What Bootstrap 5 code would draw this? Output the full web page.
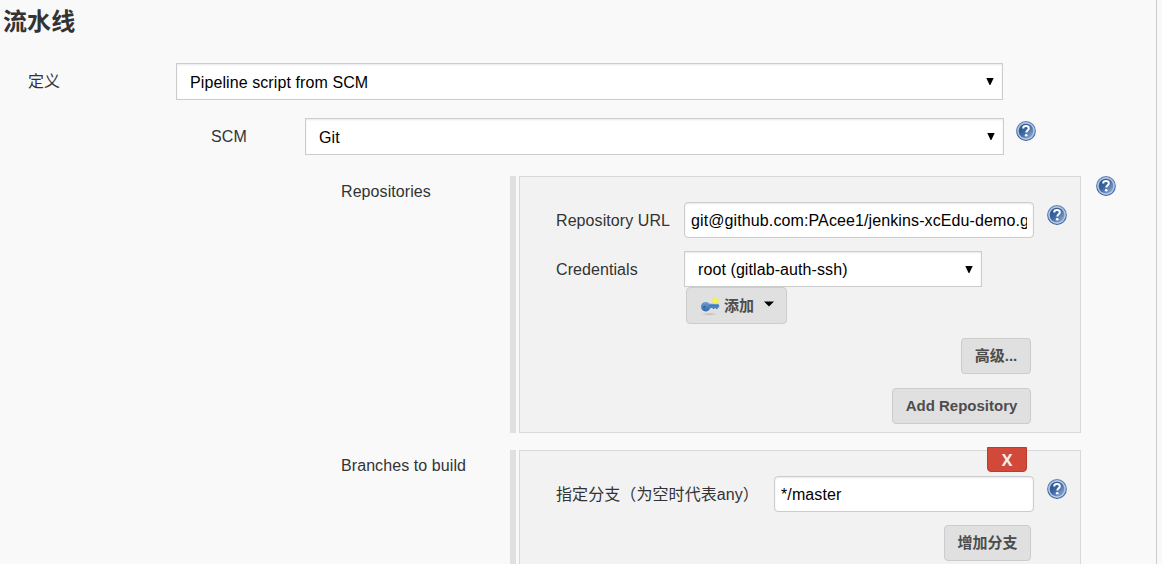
<!DOCTYPE html>
<html lang="zh-CN">
<head>
<meta charset="utf-8">
<meta name="viewport" content="width=device-width, initial-scale=1">
<title>流水线</title>
<link href="https://cdn.jsdelivr.net/npm/bootstrap@5.3.0/dist/css/bootstrap.min.css" rel="stylesheet">
<style>
body{background:#f9f9f9;color:#333;font:16px/20px "Liberation Sans","Noto Sans CJK SC",sans-serif;letter-spacing:.08px;overflow:hidden}
.config{width:1157px;height:564px;border-right:1px solid #ccc;overflow:hidden}
.title{font-size:24px;line-height:30px;font-weight:700;padding:7px 0 0 3px;height:63px}
.c1{width:148px;padding-top:9px}
.c2{width:94px;padding-top:9px}
.c3{width:169px;padding-top:6px}
.form-select,.form-control{border:1px solid #ccc;color:#000;font:inherit;line-height:20px;box-shadow:inset 0 1px 2px rgba(0,0,0,.09);height:36px}
.form-select{border-radius:0;letter-spacing:.09px;padding:2px 30px 0 13px;background:#fff url("data:image/svg+xml,%3Csvg xmlns='http://www.w3.org/2000/svg' width='8' height='7'%3E%3Cpath d='M.3 0h7.4L4.4 7h-.8z'/%3E%3C/svg%3E") no-repeat right 8px top 14px;background-size:8px 7px}
.form-control{border-radius:4px;padding:1px 6px 0;letter-spacing:.11px}
.form-select.tall,.btn-gray.tall{height:37px}
.sel1{width:827px}.sel2{width:699px}.sel3{width:298px}
.in1{width:350px}.in2{width:260px}
.help{width:20px;height:20px;flex:none;display:block}
.handle{width:6px;background:#e0e0e0;margin-right:3px}
.panel{width:562px;background:#f2f2f2;border:1px solid #d8d8d8;padding:25px 13px 8px 36px}
.panel-lbl{padding-top:9px;white-space:nowrap}
.btn-gray{background:#e0e0e0;border:1px solid #ccc;border-radius:4px;color:#4d4d4d;font:bold 15px/20px "Liberation Sans","Noto Sans CJK SC",sans-serif;letter-spacing:0;height:36px;padding:0;white-space:nowrap}
.btn-x{position:absolute;left:467px;top:-4px;width:40px;height:25px;background:#d24939;border:1px solid #b93c2e;border-radius:0 0 4px 4px;color:#eee;font:bold 16px/22px "Open Sans",sans-serif;padding:0}
</style>
</head>
<body>
<svg width="0" height="0" class="position-absolute">
<defs>
<linearGradient id="blue" x1="0" y1="0" x2="1" y2="1"><stop offset="0" stop-color="#244f91"/><stop offset=".45" stop-color="#3b659f"/><stop offset="1" stop-color="#9bb5d9"/></linearGradient>
<linearGradient id="rim" x1="0" y1="0" x2="0" y2="1"><stop offset="0" stop-color="#5f84b8"/><stop offset="1" stop-color="#33609f"/></linearGradient>
<linearGradient id="metal" x1="0" y1="0" x2="0" y2="1"><stop offset="0" stop-color="#6fa0d5"/><stop offset="1" stop-color="#326aae"/></linearGradient>
<radialGradient id="glow"><stop offset="0" stop-color="#fff94c"/><stop offset=".6" stop-color="#f7ee45"/><stop offset="1" stop-color="#f7ee45" stop-opacity="0"/></radialGradient>
<radialGradient id="shade"><stop offset="0" stop-color="#999" stop-opacity=".55"/><stop offset="1" stop-color="#999" stop-opacity="0"/></radialGradient>
<symbol id="help" viewBox="0 0 20 20">
<circle cx="10" cy="10" r="9.9" fill="url(#rim)"/><circle cx="10" cy="10" r="8.9" fill="#b3c5df"/><circle cx="10" cy="10" r="7.3" fill="url(#blue)"/>
<path d="M7.2 7.4C7.2 5.7 8.4 5.1 10 5.1s2.8.8 2.8 2.3c0 1.9-2.5 1.9-2.5 4.1" fill="none" stroke="#fff" stroke-width="2"/><circle cx="10.2" cy="14.2" r="1.3" fill="#fff"/>
</symbol>
</defs>
</svg>
<main class="config">
  <h1 class="title m-0">流水线</h1>
  <div class="d-flex" style="padding-left:28px">
    <label class="c1">定义</label>
    <select class="form-select tall sel1"><option>Pipeline script from SCM</option></select>
  </div>
  <div class="d-flex" style="padding:18px 0 0 211px">
    <label class="c2">SCM</label>
    <select class="form-select tall sel2"><option>Git</option></select>
    <svg class="help" style="margin:3px 0 0 12px"><use href="#help"/></svg>
  </div>
  <section class="d-flex" style="padding:21px 0 0 341px">
    <div class="c3">Repositories</div>
    <div class="handle"></div>
    <div class="panel" style="height:257px">
      <div class="d-flex">
        <label class="panel-lbl" style="width:128px">Repository URL</label>
        <input class="form-control in1" value="git@github.com:PAcee1/jenkins-xcEdu-demo.git">
        <svg class="help" style="margin:3px 0 0 13px"><use href="#help"/></svg>
      </div>
      <div class="d-flex" style="margin-top:13px">
        <label class="panel-lbl" style="width:128px">Credentials</label>
        <div>
          <select class="form-select sel3"><option>root (gitlab-auth-ssh)</option></select>
          <button class="btn btn-gray tall d-flex align-items-center" style="width:101px;margin-left:2px;padding-left:13px">
            <svg width="20" height="20" viewBox="0 0 20 20"><ellipse cx="9.5" cy="18.2" rx="8.5" ry="1.5" fill="url(#shade)"/><path d="M1 10.8C1 7.8 3 6 5.5 6c1.7 0 3 .7 3.8 1.7H18l1.2 1.3v2.6h-1.5V13h-1.9v-1.1h-1.2V13h-1.9v-1.1h-2.3c-.9 2.3-2.5 3.5-4.7 3.5-2.8 0-4.7-1.9-4.7-4.6z" fill="url(#metal)"/><circle cx="4.3" cy="10.9" r="1.2" fill="#396396"/><path d="M9 9.6h9" stroke="#3d6ba3" stroke-width=".7"/><circle cx="15.4" cy="4.9" r="3.8" fill="url(#glow)"/></svg>
            <span style="margin-left:4px">添加</span>
            <svg width="10" height="6" style="margin:-3px 0 0 10px"><path d="M0 .5h10L5 5.5z" fill="#000"/></svg>
          </button>
        </div>
      </div>
      <div class="d-flex flex-column align-items-end" style="margin:14px 36px 0 0;gap:14px">
        <button class="btn btn-gray" style="width:70px">高级...</button>
        <button class="btn btn-gray" style="width:139px">Add Repository</button>
      </div>
    </div>
    <svg class="help" style="margin-left:15px"><use href="#help"/></svg>
  </section>
  <section class="d-flex" style="padding:17px 0 0 341px">
    <div class="c3">Branches to build</div>
    <div class="handle"></div>
    <div class="panel position-relative" style="height:180px">
      <button class="btn btn-x">X</button>
      <div class="d-flex">
        <label class="panel-lbl" style="width:218px">指定分支（为空时代表any）</label>
        <input class="form-control in2" value="*/master">
        <svg class="help" style="margin:3px 0 0 13px"><use href="#help"/></svg>
      </div>
      <div class="d-flex justify-content-end" style="margin:13px 36px 0 0">
        <button class="btn btn-gray" style="width:87px">增加分支</button>
      </div>
    </div>
  </section>
</main>
<script src="https://cdn.jsdelivr.net/npm/bootstrap@5.3.0/dist/js/bootstrap.bundle.min.js"></script>
</body>
</html>
